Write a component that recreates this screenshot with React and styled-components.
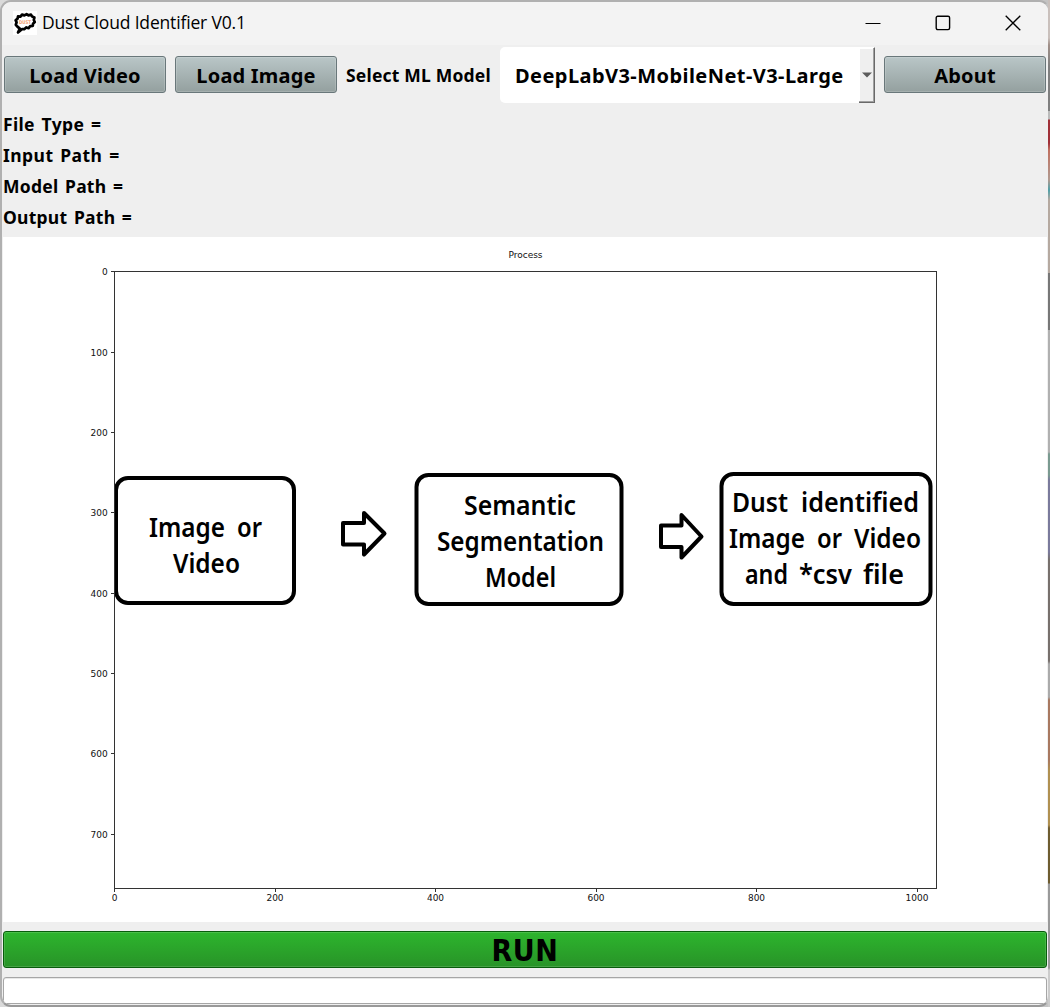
import React from "react";
import styled, { createGlobalStyle } from "styled-components";

const Global = createGlobalStyle`
  * { box-sizing: border-box; }
  body { margin: 0; background: #dcdcdc; overflow: hidden; }
`;

const Desktop = styled.div`
  width: 1050px;
  height: 1007px;
  background:
    linear-gradient(
      #c9c0bc 0 38px, #a08f88 45px, #7f7f7f 67px 111px, #bbb 111px 119px, #a03038 120px 143px,
      #c07060 150px, #b09a90 180px, #4fa0a8 190px, #b5a9a0 200px 273px, #777 273px 330px,
      #b0b0b0 330px 452px, #7a9a90 454px 475px, #7a7a9c 480px 552px, #77706c 560px 661px,
      #aaa 664px 697px, #a87860 700px 760px, #b09050 770px 825px, #6e5c30 828px 883px,
      #999 884px 968px, #ccc 970px
    ) right / 2px 100% no-repeat,
    linear-gradient(90deg, #dadada, #c4c4c4);
`;

const Window = styled.main`
  display: flex;
  flex-direction: column;
  width: 1050px;
  height: 1007px;
  border: 2px solid #b0b0b0;
  border-right-color: transparent;
  border-bottom-color: #999;
  border-radius: 11px;
  overflow: hidden;
  background: #efefef;
  background-clip: padding-box;
  color: #000;
  font-family: "Noto Sans", "Open Sans", sans-serif;
`;

const TitleBar = styled.header`
  display: flex;
  align-items: center;
  flex: none;
  height: 43px;
  padding: 0 0 2px 11px;
  background: #f3f3f3;
`;

const Title = styled.h1`
  flex: 1;
  margin: 0 0 2px 5px;
  font: 400 17.5px "Open Sans", "Noto Sans", sans-serif;
  letter-spacing: -0.17px;
`;

const Caption = styled.div`
  display: flex;
  width: 210px;
  justify-content: space-around;
  align-items: center;
  height: 100%;
`;

const Toolbar = styled.nav`
  display: flex;
  align-items: center;
  gap: 9px;
  flex: none;
  height: 60px;
  padding: 0 2px;
`;

const ToolButton = styled.button`
  width: 162px;
  height: 37px;
  margin-bottom: 1px;
  padding: 0;
  border: 1px solid #69777a;
  border-radius: 3px;
  background: linear-gradient(#b9c6c7, #94a09f);
  box-shadow: inset 0 0 0 1px rgba(255, 255, 255, 0.16);
  font: 700 20px/37px "Noto Sans", sans-serif;
  letter-spacing: 0.2px;
  color: #000;
  white-space: nowrap;
`;

const Label = styled.span`
  width: 145px;
  font-size: 17.5px;
  font-weight: 700;
  line-height: 30px;
  letter-spacing: 0.2px;
  white-space: nowrap;
`;

const Combo = styled.div`
  display: flex;
  width: 375px;
  height: 56px;
  border-radius: 5px 0 0 5px;
  background: #fff;
`;

const ComboValue = styled.span`
  flex: 1;
  padding-left: 15px;
  font-size: 20px;
  font-weight: 700;
  line-height: 57px;
  letter-spacing: 0.44px;
  white-space: nowrap;
`;

const ComboArrow = styled.span`
  display: flex;
  align-items: center;
  justify-content: center;
  width: 16px;
  background: #efefef;
  border: solid;
  border-width: 1px 1px 1px 0;
  border-color: #fff #696969 #696969 #fff;
  box-shadow: inset -1px -1px #a0a0a0, inset 1px 1px #fff;
`;

const Info = styled.section`
  display: flex;
  flex-direction: column;
  flex: none;
  height: 132px;
  padding: 4px 0 0 1px;
`;

const InfoRow = styled.div`
  height: 31px;
  font-size: 17.5px;
  font-weight: 700;
  line-height: 31px;
  letter-spacing: ${(p) => p.$spacing};
  word-spacing: 1.8px;
`;

const Plot = styled.svg`
  display: block;
  flex: none;
  width: 1044px;
  height: 685px;
  margin: 0 1px;
  background: #fff;
`;

const Tick = styled.text`
  font: 9px "DejaVu Sans", sans-serif;
  fill: #111;
  text-anchor: ${(p) => p.$anchor};
`;

const Hand = styled.text`
  font: 600 27px "Comic Sans MS", "Noto Sans", sans-serif;
`;

const RunButton = styled.button`
  flex: none;
  height: 37px;
  margin: 9px 1px;
  padding: 0;
  border: 1px solid #075c0b;
  border-radius: 3px;
  background: linear-gradient(#2db52d, #289328);
  box-shadow: inset 0 0 0 1px rgba(255, 255, 255, 0.14);
  font: 700 30px/38px "DejaVu Sans Condensed", "DejaVu Sans", sans-serif;
  font-stretch: condensed;
  letter-spacing: 0.6px;
  color: #000;
`;

const Progress = styled.div`
  flex: none;
  height: 27px;
  margin: 0 1px;
  border: 1px solid #a6a6a6;
  border-radius: 3px;
  background: #fff;
  box-shadow: inset 0 1px #e8e8e8;
`;

const xTicks = [0, 200, 400, 600, 800, 1000];
const yTicks = [0, 100, 200, 300, 400, 500, 600, 700];

const boxes = [
  { x: 116, y: 478, w: 178, h: 125 },
  { x: 416.5, y: 475, w: 205, h: 129 },
  { x: 721.5, y: 474, w: 209, h: 130 },
];

const words = [
  { t: "Image", x: 149, y: 537, w: 76 },
  { t: "or", x: 237, y: 537, w: 25 },
  { t: "Video", x: 173, y: 573, w: 67 },
  { t: "Semantic", x: 464, y: 515, w: 112 },
  { t: "Segmentation", x: 437, y: 551, w: 167 },
  { t: "Model", x: 485, y: 587, w: 71 },
  { t: "Dust", x: 732, y: 512, w: 56 },
  { t: "identified", x: 801, y: 512, w: 118 },
  { t: "Image", x: 729, y: 548, w: 76 },
  { t: "or", x: 817, y: 548, w: 25 },
  { t: "Video", x: 854, y: 548, w: 67 },
  { t: "and", x: 745, y: 584, w: 43 },
  { t: "*csv", x: 799, y: 584, w: 53 },
  { t: "file", x: 863, y: 584, w: 41 },
];

const infoRows = [
  { text: "File Type =", spacing: "0.35px" },
  { text: "Input Path =", spacing: "0.45px" },
  { text: "Model Path =", spacing: "0.25px" },
  { text: "Output Path =", spacing: "0.25px" },
];

function CloudIcon() {
  return (
    <svg width="24" height="24" viewBox="0 0 24 24">
      <rect width="24" height="24" fill="#fff" />
      <path
        d="M5 21.5 6.8 17.6 4.4 15.6 2.8 13.8 3.6 11.4 2.6 9.2 4.6 7.6 5 5.4 7.6 5.6 9 3.6 11.4 4.4 13.6 3.2 15.4 4.4 18 3.6 19.2 5.6 21.4 6.6 20.8 9 21.8 11 20 12.8 19.8 15 17.2 15.2 15.6 17.2 13.4 16.4 11.2 18.2 9.2 18Z"
        fill="#fff"
        stroke="#000"
        strokeWidth="2.7"
        strokeLinejoin="round"
      />
      <text x="6" y="13.2" textLength="12" lengthAdjust="spacingAndGlyphs" fontFamily="DejaVu Sans" fontWeight="700" fontSize="5" fill="#f4a070">
        DUST
      </text>
    </svg>
  );
}

function ProcessPlot() {
  return (
    <Plot viewBox="3 237 1044 685">
      <Tick x="525.5" y="258" $anchor="middle">Process</Tick>
      {boxes.map((b) => (
        <rect key={b.x} x={b.x} y={b.y} width={b.w} height={b.h} rx="12" fill="none" stroke="#000" strokeWidth="4" />
      ))}
      <g fill="none" stroke="#000" strokeWidth="4" strokeLinejoin="round">
        <path d="M343 523H364V513L384.5 533.5 364 554.5V544.5H343Z" />
        <path d="M661 525.5H681.5V515L701.5 536.5 681.5 557.5V547H661Z" />
      </g>
      {words.map((l) => (
        <Hand key={`${l.x}-${l.y}`} x={l.x} y={l.y} textLength={l.w} lengthAdjust="spacingAndGlyphs">{l.t}</Hand>
      ))}
      <rect x="114.5" y="271.5" width="822" height="617" fill="none" stroke="#333" shapeRendering="crispEdges" />
      {xTicks.map((v, i) => {
        const x = 114.9 + i * 160.5;
        return (
          <g key={v}>
            <path d={`M${Math.floor(x) + 0.5} 889v3`} stroke="#333" />
            <Tick x={x - 0.4} y="901" $anchor="middle">{v}</Tick>
          </g>
        );
      })}
      {yTicks.map((v, i) => {
        const y = 271.9 + i * 80.3;
        return (
          <g key={v}>
            <path d={`M111 ${Math.floor(y) + 0.5}h3`} stroke="#333" />
            <Tick x="107.7" y={Math.floor(y) + 3.5} $anchor="end">{v}</Tick>
          </g>
        );
      })}
    </Plot>
  );
}

export default function App() {
  return (
    <Desktop>
      <Global />
      <Window>
        <TitleBar>
          <CloudIcon />
          <Title>Dust Cloud Identifier V0.1</Title>
          <Caption>
            <svg width="16" height="16"><path d="M.5 8.5h15" stroke="#000" /></svg>
            <svg width="16" height="16"><rect x="1.2" y="1.2" width="13.4" height="13.4" rx="1.5" fill="none" stroke="#000" strokeWidth="1.4" /></svg>
            <svg width="16" height="16"><path d="M.7.7l14.6 14.6M15.3.7.7 15.3" stroke="#000" strokeWidth="1.3" /></svg>
          </Caption>
        </TitleBar>
        <Toolbar>
          <ToolButton>Load Video</ToolButton>
          <ToolButton>Load Image</ToolButton>
          <Label>Select ML Model</Label>
          <Combo>
            <ComboValue>DeepLabV3-MobileNet-V3-Large</ComboValue>
            <ComboArrow>
              <svg width="10" height="6"><path d="M0 .5h10L5 5.5Z" fill="#5c5c5c" /></svg>
            </ComboArrow>
          </Combo>
          <ToolButton>About</ToolButton>
        </Toolbar>
        <Info>
          {infoRows.map((row) => (
            <InfoRow key={row.text} $spacing={row.spacing}>{row.text}</InfoRow>
          ))}
        </Info>
        <ProcessPlot />
        <RunButton>RUN</RunButton>
        <Progress />
      </Window>
    </Desktop>
  );
}
